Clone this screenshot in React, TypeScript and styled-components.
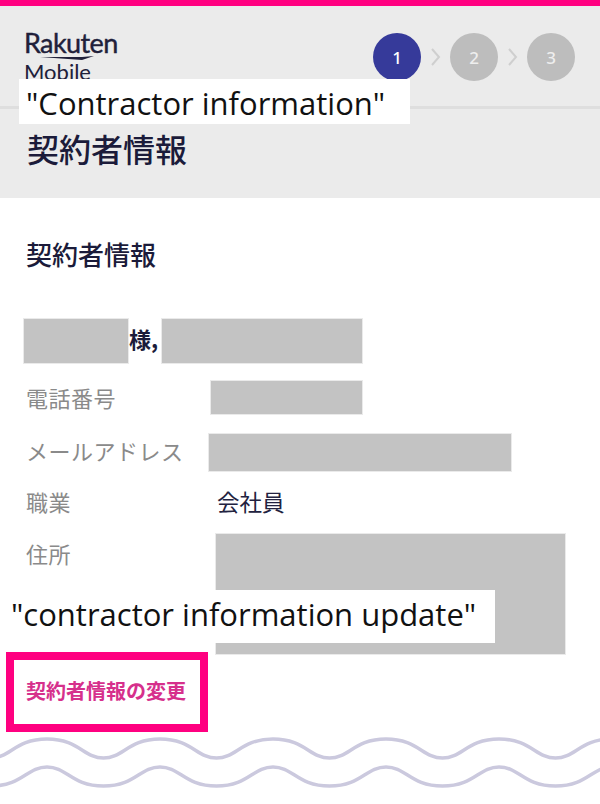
import React from "react";
import styled, { createGlobalStyle } from "styled-components";

const Global = createGlobalStyle`
  html, body { margin: 0; padding: 0; background: #fff; }
  body { font-family: "Noto Sans CJK JP", "Noto Sans", sans-serif; color: #1b1b3a; }
`;

const Page = styled.div`
  position: relative;
  width: 600px;
  height: 804px;
  overflow: hidden;
  background: #fff;
`;

const Header = styled.header`
  height: 192px;
  border-top: 6px solid #ff0080;
  background: #ebebeb;
  box-sizing: content-box;
`;

const TopBar = styled.div`
  height: 103px;
  box-sizing: border-box;
  border-bottom: 3px solid #dedede;
  padding: 27px 25px 0 24px;
  display: flex;
  justify-content: space-between;
  align-items: flex-start;
`;

const Logo = styled.div`
  width: 100px;
  margin-top: -4px;
  font-family: "Lato", "Liberation Sans", sans-serif;
  color: #20203a;
  line-height: 1;
`;

const LogoName = styled.div`
  font-size: 27px;
  font-weight: 400;
  letter-spacing: -0.6px;
  height: 27px;
  -webkit-text-stroke: 0.4px #20203a;
`;

const Swoosh = styled.svg`
  display: block;
  width: 60px;
  height: 5px;
  margin-left: 16px;
`;

const LogoSub = styled.div`
  font-size: 22px;
`;

const Stepper = styled.ol`
  list-style: none;
  margin: 0;
  padding: 0;
  display: flex;
  align-items: center;
  gap: 9px;
`;

const Step = styled.li<{ $active?: boolean }>`
  width: 48px;
  height: 48px;
  border-radius: 50%;
  display: flex;
  align-items: center;
  justify-content: center;
  background: ${(p) => (p.$active ? "#363a9a" : "#bdbdbd")};
  color: ${(p) => (p.$active ? "#fff" : "#eee")};
  font-size: 17px;
  font-weight: 500;
  font-family: "Noto Sans", sans-serif;
`;

const ChevronItem = styled.li`
  display: flex;
`;

const Chevron = styled.svg`
  width: 11px;
  height: 18px;
  fill: none;
  stroke: #cfcfcf;
  stroke-width: 2;
`;

const PageTitle = styled.h1`
  margin: 0;
  padding: 16px 0 0 27px;
  font-size: 32px;
  font-weight: 500;
  line-height: 46px;
`;

const Main = styled.main`
  padding: 37px 0 0 26px;
`;

const SectionTitle = styled.h2`
  margin: 0;
  font-size: 26px;
  font-weight: 500;
  line-height: 38px;
  height: 84px;
`;

const NameRow = styled.div`
  display: flex;
  align-items: center;
  height: 44px;
  font-size: 22px;
  font-weight: 700;
  margin-left: -2px;
`;

const NameSuffix = styled.span`
  margin-top: -7px;
  margin-left: 1px;
`;

const Redact = styled.span<{ $w: number; $h: number; $x?: number }>`
  display: block;
  flex: none;
  width: ${(p) => p.$w}px;
  height: ${(p) => p.$h}px;
  margin-left: ${(p) => p.$x ?? 0}px;
  background: #c3c3c3;
  box-shadow: 0 0 0 1px #eaeaea;
`;

const Row = styled.div<{ $h: number; $top: number }>`
  display: flex;
  align-items: flex-start;
  height: ${(p) => p.$h}px;
  margin-top: ${(p) => p.$top}px;
`;

const Label = styled.div<{ $lh?: number }>`
  width: 183px;
  flex: none;
  font-size: 22px;
  letter-spacing: 0.5px;
  line-height: ${(p) => p.$lh ?? 32}px;
  color: #8a8a8a;
  white-space: nowrap;
`;

const Value = styled.div`
  font-size: 22.5px;
  line-height: 32px;
  margin-left: 8px;
  color: #222240;
`;

const ChangeLink = styled.a`
  display: flex;
  align-items: center;
  box-sizing: border-box;
  width: 202px;
  height: 80px;
  margin-left: -20px;
  padding: 0 0 4px 12px;
  border: 8px solid #ff0080;
  color: #d6308c;
  font-size: 20px;
  font-weight: 700;
  white-space: nowrap;
`;

const WaveBand = styled.svg`
  display: block;
  width: 600px;
  height: 60px;
  margin-top: 2px;
  fill: none;
  stroke: #cbc9de;
  stroke-width: 3.5;
`;

const Note = styled.div<{ $w: number; $h: number; $x: number; $y: number; $pad: number; $lh: number }>`
  position: absolute;
  left: ${(p) => p.$x}px;
  top: ${(p) => p.$y}px;
  width: ${(p) => p.$w}px;
  height: ${(p) => p.$h}px;
  box-sizing: border-box;
  padding-left: ${(p) => p.$pad}px;
  background: #fff;
  color: #111;
  font-family: "Open Sans", "Noto Sans", sans-serif;
  font-size: 31px;
  line-height: ${(p) => p.$lh}px;
  white-space: nowrap;
`;

function wave(y0: number, y1: number, near: number, far: number) {
  const period = 113;
  const half = period / 2;
  let x = 47 - period;
  let d = `M${x} ${y0}`;
  while (x < 640) {
    d += ` C${x + near} ${y0} ${x + half - far} ${y1} ${x + half} ${y1}`;
    d += ` C${x + half + far} ${y1} ${x + period - near} ${y0} ${x + period} ${y0}`;
    x += period;
  }
  return d;
}

export default function App() {
  return (
    <Page>
      <Global />
      <Header>
        <TopBar>
          <Logo>
            <LogoName>Rakuten</LogoName>
            <Swoosh viewBox="0 0 60 5">
              <path d="M0 1 L42 1 L54 0 L42 4 Z" fill="#20203a" />
            </Swoosh>
            <LogoSub>Mobile</LogoSub>
          </Logo>
          <Stepper>
            <Step $active>1</Step>
            <ChevronItem>
              <Chevron viewBox="0 0 11 18"><path d="M2 1 L9 9 L2 17" /></Chevron>
            </ChevronItem>
            <Step>2</Step>
            <ChevronItem>
              <Chevron viewBox="0 0 11 18"><path d="M2 1 L9 9 L2 17" /></Chevron>
            </ChevronItem>
            <Step>3</Step>
          </Stepper>
        </TopBar>
        <PageTitle>契約者情報</PageTitle>
      </Header>
      <Main>
        <SectionTitle>契約者情報</SectionTitle>
        <NameRow>
          <Redact $w={104} $h={44} />
          <NameSuffix>様,</NameSuffix>
          <Redact $w={200} $h={44} $x={4} />
        </NameRow>
        <Row $h={33} $top={18}>
          <Label>電話番号</Label>
          <Redact $w={151} $h={33} $x={2} />
        </Row>
        <Row $h={37} $top={20}>
          <Label>メールアドレス</Label>
          <Redact $w={302} $h={37} />
        </Row>
        <Row $h={36} $top={14}>
          <Label>職業</Label>
          <Value>会社員</Value>
        </Row>
        <Row $h={118} $top={13}>
          <Label $lh={38}>住所</Label>
          <Redact $w={349} $h={120} $x={7} />
        </Row>
        <ChangeLink>契約者情報の変更</ChangeLink>
      </Main>
      <WaveBand viewBox="0 0 600 60">
        <path d={wave(5, 24, 32, 20)} />
        <path d={wave(33, 52, 20, 32)} />
      </WaveBand>
      <Note $x={19} $y={79} $w={391} $h={45} $pad={7} $lh={49}>"Contractor information"</Note>
      <Note $x={0} $y={590} $w={495} $h={53} $pad={11} $lh={48}>"contractor information update"</Note>
    </Page>
  );
}
